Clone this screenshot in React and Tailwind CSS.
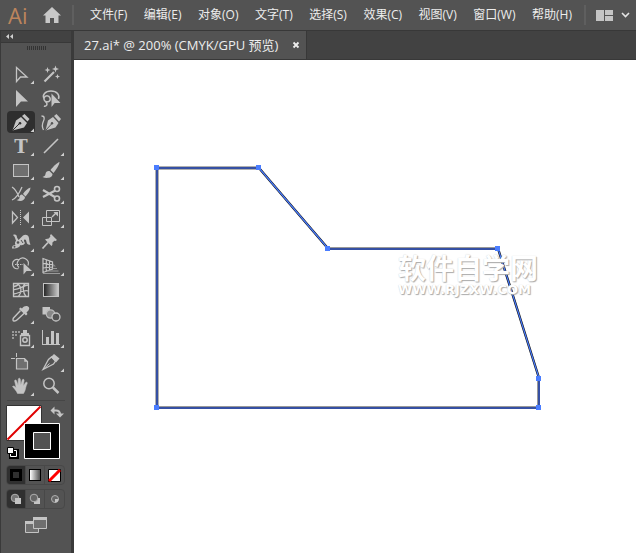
import React, { useState } from 'react';

const menus = ['文件(F)', '编辑(E)', '对象(O)', '文字(T)', '选择(S)', '效果(C)', '视图(V)', '窗口(W)', '帮助(H)'];

const C = '#c4c4c4';

// every icon is drawn on a 28 x 22 grid
const tools = [
  { name: 'Direct Selection', more: true, icon: <path d="M9.5 4.5v14l4-4.5h6.5z" fill="none" stroke={C} strokeWidth="1.3" /> },
  {
    name: 'Magic Wand', icon: <g stroke={C} fill={C}>
      <path d="M7.5 18.5L17 9" strokeWidth="2.2" />
      <path d="M10.5 4l.8 2.2 2.2.8-2.2.8-.8 2.2-.8-2.2-2.2-.8 2.2-.8zM18.5 2.5l.9 2.6 2.6.9-2.6.9-.9 2.6-.9-2.6-2.6-.9 2.6-.9zM20.5 11l.7 1.8 1.8.7-1.8.7-.7 1.8-.7-1.8-1.8-.7 1.8-.7z" stroke="none" />
    </g>
  },
  { name: 'Selection', icon: <path d="M9 3v17l5-5.5h7z" fill={C} /> },
  {
    name: 'Lasso', icon: <g fill="none" stroke={C} strokeWidth="1.5">
      <path d="M7 11.5C5 8 8 4 14 4s9 4 7.5 8" />
      <path d="M8 14c3 2 6 0 5-3s-5-3-6 0 3 4 3 6-2 2.5-3 2" />
      <path d="M14.5 6.5v13.5l3.2-4H23.5z" fill={C} stroke="none" />
    </g>
  },
  {
    name: 'Pen', more: true, icon: <g>
      <path d="M5.5 19.5L9 9.5l5-3.5 6 6-3 4.5z" fill={C} />
      <path d="M15 5l2.5-2 5 5-2 2.5z" fill={C} />
      <path d="M5.5 19.5l6.5-6.5" stroke="#2e2e2e" strokeWidth="1" />
      <circle cx="13" cy="12.2" r="1.3" fill="#2e2e2e" />
    </g>
  },
  {
    name: 'Curvature', icon: <g>
      <path d="M8.5 19.5L11 9.5l5-3.5 5.5 6-3 4.5z" fill={C} />
      <path d="M17 5l2.5-2 4.5 5-2 2.5z" fill={C} />
      <path d="M8.5 19.5l6-6.5" stroke="#535353" strokeWidth="1" />
      <circle cx="15" cy="12.2" r="1.2" fill="#535353" />
      <path d="M4.5 5c3.5 0 3 3 1.8 5.5S5 16 6.5 19" fill="none" stroke={C} strokeWidth="1.3" />
    </g>
  },
  { name: 'Type', more: true, icon: <text x="14" y="18" textAnchor="middle" fontFamily="DejaVu Serif, serif" fontSize="18" fontWeight="bold" fill={C}>T</text> },
  { name: 'Line Segment', more: true, icon: <path d="M7 18L21 4" stroke={C} strokeWidth="1.6" /> },
  { name: 'Rectangle', more: true, icon: <rect x="6.5" y="5.5" width="15" height="12" fill="#6f6f6f" stroke={C} /> },
  {
    name: 'Paintbrush', more: true, icon: <g fill={C}>
      <path d="M22.5 3c-2 .5-6 4-9 8l3 3c3-4 6-8.5 6-11z" />
      <path d="M12.5 12c-2-.5-3.8.8-4 3-.2 2-1.5 2.5-3 3 4 1.8 10 1 10-3z" />
    </g>
  },
  {
    name: 'Shaper', more: true, icon: <g>
      <path d="M5 4c2.5 1.5 5 5 7 10M5 17c3-1 7-6 10-13" fill="none" stroke={C} strokeWidth="1.3" />
      <path d="M23.5 4.5c-3 1-6 4-7.5 6.5l2.5 2.5c2.5-3 5-6 5-9zM15 11.5c-2 0-2.5 1.5-2.5 3s-1.5 2.5-3 2.5c4 2 8.5.5 8.5-3z" fill={C} />
    </g>
  },
  {
    name: 'Scissors', more: true, icon: <g fill="none" stroke={C} strokeWidth="1.6">
      <circle cx="20" cy="6" r="2.5" />
      <circle cx="20" cy="15.5" r="2.5" />
      <path d="M17.8 7.8L6 14M17.8 14L6 7" strokeWidth="2.2" />
    </g>
  },
  {
    name: 'Reflect', more: true, icon: <g fill="none" stroke={C}>
      <path d="M5.5 5v11l5-5.5z" strokeWidth="1.3" />
      <path d="M13.5 3v15" strokeDasharray="1 1" />
      <path d="M22 4.5v12L16 10.5z" fill={C} stroke="none" />
    </g>
  },
  {
    name: 'Scale', more: true, icon: <g fill="none" stroke={C}>
      <path d="M9.5 3.5h13v11h-13z" />
      <path d="M5.5 10.5h9v8h-9z" />
      <path d="M15 10l4-4" strokeWidth="1.5" />
      <path d="M16.5 5H21v4.5z" fill={C} stroke="none" />
    </g>
  },
  {
    name: 'Width', more: true, icon: <g>
      <path d="M6 4c2.500-1 4 0 4 2.500l1.500 2.500L16 4.500c2.500-1.500 5.500-.5 6 2.500.3 2 .2 4 1.500 6.500-2 .8-3.800-.5-4-2.500-.2-1.500-.8-3-2-2.500-1 .5-.5 2 .5 3.500-1 2-3 2.500-4.500 2-1 2.500-4 4-8.500 3.500 0-2.500 1-3.500 3.500-3.500-1-1.500-.5-3 .5-4.500C8 8 8.500 6 6 4z" fill={C} />
      <circle cx="11" cy="11.500" r="1.3" fill="#535353" />
      <path d="M14 9l2 3" stroke="#535353" />
      <circle cx="7.500" cy="15.800" r="1" fill="#535353" />
    </g>
  },
  {
    name: 'Puppet Warp', more: true, icon: <g>
      <path d="M14 3l6 6-1.5 1-1.2-.3-2 2c.4 1.5 0 2.5-.8 3.3L8 8.5c1-.8 2-1 3.3-.7l2-2L13 4.5z" fill={C} />
      <path d="M5.5 17.5l5.5-6" stroke={C} strokeWidth="1.8" />
    </g>
  },
  {
    name: 'Shape Builder', more: true, icon: <g fill="none" stroke={C} strokeWidth="1.2">
      <path d="M11.5 13.5c-3.5 1-6-1.5-6-4.5s3-5.5 6.5-4.2" />
      <path d="M12 12.5a5.5 5.5 0 1 1 9-2" />
      <path d="M8 9.5h8" strokeDasharray="1.5 1" />
      <path d="M16.5 8v11.5l3-3.5H25z" fill={C} stroke="none" />
    </g>
  },
  {
    name: 'Perspective Grid', more: true, icon: <g fill="none" stroke={C} strokeWidth="1.2">
      <path d="M6 3.5v14l9.5-3.5V7zM9.3 4.5v12M12.5 5.8v9.4M6 8.3l9.5 1.4M6 13l9.5-1" />
      <path d="M16 8.5l3 3h-3" fill="#888" stroke="none" />
      <path d="M15.5 13.5H20M11 16h10.5M6 18.5h17" stroke="#999" />
    </g>
  },
  {
    name: 'Mesh', icon: <g fill="none" stroke={C} strokeWidth="1.3">
      <path d="M6.5 4.5h15v13h-15z" />
      <path d="M10 4.5c5 3 5 9 1.5 13M21.5 6c-5 0-9 5-15 4.5M21.5 12c-5-2-10 3-15 3M18 4.5c-3 3-2 9 1 13M6.5 7.5c3 0 4-1 5.5-3" />
    </g>
  },
  {
    name: 'Gradient', icon: <g>
      <defs><linearGradient id="toolGrad"><stop stopColor="#222" /><stop offset="1" stopColor="#ccc" /></linearGradient></defs>
      <rect x="6.5" y="4.5" width="15" height="13" fill="url(#toolGrad)" stroke={C} />
    </g>
  },
  {
    name: 'Eyedropper', more: true, icon: <g>
      <path d="M13.5 7.5L6.5 15c-1 1.5-.5 3.5 1 3 1.5 0 2-.5 3-1.5l7-6.5" fill="none" stroke={C} strokeWidth="1.4" />
      <path d="M12 6l1.5-1.5 1.5 1C17 3 19 2.5 21 3.5s1.5 3.5-1.5 6l1 1.5-1.5 1.5z" fill={C} />
    </g>
  },
  {
    name: 'Blend', icon: <g>
      <path d="M5.5 4h7.5v7.5H5.5z" fill={C} />
      <circle cx="13.5" cy="11" r="4.2" fill="#888" stroke="#bbb" strokeWidth="1.2" />
      <circle cx="19" cy="14" r="4" fill="#535353" stroke={C} strokeWidth="1.3" />
    </g>
  },
  {
    name: 'Symbol Sprayer', more: true, icon: <g>
      <path d="M5 4h2v2H5zM8 4h2v2H8zM11 4h2v2h-2zM5 7h2v2H5zM8 7h2v2H8zM5 10h2v2H5z" fill="#999" />
      <path d="M13.5 8.5h9v10h-9z" fill="none" stroke={C} strokeWidth="1.4" />
      <path d="M16 3h4v3h2v2h-8V6h2z" fill={C} />
      <circle cx="18" cy="13" r="2.2" fill="none" stroke={C} strokeWidth="1.5" />
    </g>
  },
  {
    name: 'Column Graph', more: true, icon: <g fill={C}>
      <path d="M5 3h1v14h17v1H5z" />
      <path d="M9 10h3v7H9zM14 4h3v13h-3zM19 6h3v11h-3z" />
    </g>
  },
  {
    name: 'Artboard', icon: <g stroke={C}>
      <path d="M9.5 7.5h8l3 3v7.5h-11z" fill="#6f6f6f" strokeWidth="1.2" />
      <path d="M4 7.5h4M9.5 2v4" />
      <path d="M17.5 7.5v3h3z" fill={C} strokeWidth="0.5" />
    </g>
  },
  {
    name: 'Slice', more: true, icon: <g>
      <path d="M6 18.5l5.5-10 3-2.5 4 4-2 3z" fill="none" stroke={C} strokeWidth="1.3" />
      <path d="M6 18.5l6.5-6" stroke={C} />
      <path d="M14 6l3-3 5.5 4.5-3.5 4z" fill={C} />
    </g>
  },
  {
    name: 'Hand', more: true, icon: <path d="M10.5 18.5c-1-2.5-3-4.5-5-7 .8-1 2-.5 3.7 1.2L7.6 6c0-1.3 1.5-1.5 1.9-.2l1.6 4.4.2-6c.2-1.3 1.8-1.3 2 0l.5 5.8 1.4-5c.5-1.2 2-.8 1.9.5l-.9 5.5 2.5-3.5c.9-.9 2 0 1.5 1-1.5 3-1.5 5-2.2 7-.3 1.2-1 2-1.5 3z" fill={C} stroke={C} strokeWidth="0.5" />
  },
  {
    name: 'Zoom', icon: <g fill="none" stroke={C}>
      <circle cx="12" cy="8.5" r="5.2" strokeWidth="1.5" />
      <path d="M16 12.5l5.5 5.5" strokeWidth="2.5" />
    </g>
  },
];

// anchor points of the selected path, in artboard coordinates
const anchors = [[82, 107], [184, 107], [253, 188], [423, 188], [464, 318], [464, 347], [82, 347]];

function MenuBar() {
  return (
    <header className="flex h-[31px] shrink-0 items-center border-b border-[#383838] pr-1">
      <span className="w-8 pl-2 font-['Open_Sans',sans-serif] text-[22px] leading-6 font-medium text-[#bd855d]">Ai</span>
      <button aria-label="Home" className="flex w-10 justify-center">
        <svg width="18" height="16" viewBox="0 0 18 16" fill="#c8c8c8">
          <path d="M9 0L18 8.5h-2.5V16h-4.5v-5H7v5H2.5V8.5H0z" />
        </svg>
      </button>
      <div className="h-5 w-0.5 bg-[#5f5f5f]" />
      <nav className="flex flex-1 items-center justify-between pr-3 pl-4">
        {menus.map((m) => (
          <button key={m} className="text-xs leading-5 whitespace-nowrap">{m}</button>
        ))}
      </nav>
      <div className="h-5 w-0.5 bg-[#5f5f5f]" />
      <button aria-label="Arrange documents" className="flex items-center gap-2 pr-0.5 pl-2.5">
        <svg width="17" height="11" viewBox="0 0 17 11" fill="#c4c4c4">
          <path d="M0 0h8v11H0zM9 0h8v5H9zM9 6h8v5H9z" />
        </svg>
        <svg width="9" height="6" viewBox="0 0 9 6" fill="none" stroke="#e4e4e4" strokeWidth="1.6">
          <path d="M1 1l3.5 3.5L8 1" />
        </svg>
      </button>
    </header>
  );
}

function ToolPanel() {
  const [active, setActive] = useState('Pen');
  return (
    <aside className="flex w-[74px] shrink-0 flex-col border-r-3 border-l border-[#3a3a3a]">
      <div className="flex h-3 items-center border-b border-[#383838] bg-[#424242] pl-1">
        <svg width="9" height="5" viewBox="0 0 9 5" fill="#d0d0d0">
          <path d="M4 0v5L1 2.500zM8 0v5L5 2.500z" />
        </svg>
      </div>
      <div className="flex h-5 justify-center pt-[3px]">
        <svg width="19" height="4" viewBox="0 0 19 4">
          <path d="M0 2h19" stroke="#333" strokeWidth="4" strokeDasharray="1 1" />
        </svg>
      </div>
      <div className="grid grid-cols-[28px_28px] gap-0.5 pl-1.5">
        {tools.map((t) => (
          <button
            key={t.name}
            aria-label={t.name}
            onClick={() => setActive(t.name)}
            className={t.name === active ? 'rounded-sm bg-[#2e2e2e]' : 'rounded-sm'}
          >
            <svg width="28" height="22" viewBox="0 0 28 22" className="block">
              {t.icon}
              {t.more && <path d="M27 17.5V21h-3.5z" fill="#d0d0d0" />}
            </svg>
          </button>
        ))}
      </div>
      <div className="mx-1.5 mt-[3px] h-px bg-[#464646]" />
      <ColorControls />
    </aside>
  );
}

function ColorControls() {
  return (
    <div className="flex flex-col items-start pt-1 pl-[5px]">
      {/* fill and stroke swatches */}
      <svg width="60" height="56" viewBox="0 0 60 56" role="img" aria-label="Fill and stroke">
        <path d="M.5.5h35v35H.5z" fill="#fff" stroke="#333" />
        <path d="M1.5 34.5l33-33" stroke="#e00000" strokeWidth="2" />
        <path d="M18.5 18.5h35v35h-35z" fill="#000" stroke="#fff" />
        <path d="M27.5 27.5h17v17h-17z" fill="#535353" stroke="#fff" />
        <path d="M47 5.5h3c3 0 4 2 4 4" fill="none" stroke={C} strokeWidth="2" />
        <path d="M44.5 5.5l4-4v8zM50 8.5h8l-4 4z" fill={C} />
        <path d="M4.5 45.5h7v7h-7z" fill="#000" stroke="#000" strokeWidth="3" />
        <path d="M4.5 45.5h6v6h-6z" fill="none" stroke="#fff" />
        <path d="M1.5 42.5h6v6h-6z" fill="#fff" stroke="#000" />
      </svg>
      <div className="mt-1 grid grid-cols-3 divide-x divide-[#484848] overflow-hidden rounded-sm border border-[#484848]">
        <button aria-label="Color" className="flex h-[18px] w-[19px] items-center justify-center bg-[#303030]">
          <span className="block h-3 w-3 border-3 border-black bg-[#303030]" />
        </button>
        <button aria-label="Gradient fill" className="flex h-[18px] w-[19px] items-center justify-center">
          <span className="block h-3 w-3 border border-black bg-linear-to-r from-white to-[#555]" />
        </button>
        <button aria-label="None" className="flex h-[18px] w-[19px] items-center justify-center">
          <svg width="13" height="13" viewBox="0 0 13 13">
            <path d="M.5.5h12v12H.5z" fill="#fff" stroke="#000" />
            <path d="M1 12L12 1" stroke="#f00" strokeWidth="3" />
          </svg>
        </button>
      </div>
      <div className="mt-1 grid grid-cols-3 divide-x divide-[#484848] overflow-hidden rounded-sm border border-[#484848]">
        <button aria-label="Draw normal" className="flex h-[18px] w-[19px] items-center justify-center bg-[#303030]">
          <svg width="12" height="12" viewBox="0 0 12 12">
            <circle cx="5" cy="5" r="3.8" fill="#777" stroke="#b0b0b0" />
            <path d="M5 5h6v6H5z" fill={C} />
          </svg>
        </button>
        <button aria-label="Draw behind" className="flex h-[18px] w-[19px] items-center justify-center">
          <svg width="12" height="12" viewBox="0 0 12 12">
            <path d="M5 5h6v6H5z" fill={C} />
            <circle cx="5" cy="5" r="3.8" fill="#666" stroke="#b0b0b0" />
          </svg>
        </button>
        <button aria-label="Draw inside" className="flex h-[18px] w-[19px] items-center justify-center">
          <svg width="12" height="12" viewBox="0 0 12 12">
            <circle cx="6" cy="6" r="3.5" fill="#666" stroke="#b0b0b0" />
            <path d="M6 6h3.5a3.5 3.5 0 0 1-3.5 3.5z" fill={C} />
          </svg>
        </button>
      </div>
      <button aria-label="Screen mode" className="mt-2 ml-[19px]">
        <svg width="23" height="16" viewBox="0 0 23 16" className="block">
          <path d="M.5 5.5h13v10H.5z" fill="#6f6f6f" stroke={C} />
          <path d="M8.5.5h13v11h-13z" fill="#6f6f6f" stroke={C} />
          <path d="M8 0h14v3H8zM0 4h8v3H0z" fill={C} />
        </svg>
      </button>
    </div>
  );
}

function Artboard() {
  return (
    <main className="relative flex-1 overflow-hidden bg-white">
      <svg width="562" height="493" viewBox="0 0 562 493" className="absolute top-0 left-0" fill="none">
        <path d="M81 108H185M83 348V107" stroke="#b0b0b0" strokeWidth="4" />
        <path d="M254 188.5H424M464.5 318V348M83 347.5H465" stroke="#999" strokeWidth="3" />
        <path d="M185 108L254 188.5M424 188.5L465 318" stroke="#111" strokeWidth="2.4" />
        <path d="M185 108L254 188.5M424 188.5L465 318" stroke="#4a7dff" strokeWidth="1.2" />
        <path d="M82 108H185M83 348V107M254 189H424M465 318V348M82 348H465" stroke="#3550a3" strokeWidth="2" />
      </svg>
      <div className="absolute top-[194px] left-[324px] font-bold text-white [text-shadow:1px_1px_1px_#aaa,0_0_1px_#ccc]">
        <p className="text-[28px] leading-7">软件自学网</p>
        <p className="font-['DejaVu_Sans',sans-serif] text-[13px] leading-4">WWW.RJZXW.COM</p>
      </div>
      <svg width="562" height="493" viewBox="0 0 562 493" className="absolute top-0 left-0">
        {anchors.map(([x, y]) => (
          <rect key={`${x}-${y}`} x={x - 2} y={y - 2} width="5" height="5" fill="#4a7dff" />
        ))}
      </svg>
    </main>
  );
}

function App() {
  return (
    <div className="flex min-h-screen flex-col bg-[#535353] font-['Open_Sans','Noto_Sans_CJK_SC',sans-serif] text-[#ededed]">
      <MenuBar />
      <div className="flex flex-1">
        <ToolPanel />
        <div className="flex min-w-0 flex-1 flex-col">
          <div className="flex h-[29px] shrink-0 border-b border-[#383838] bg-[#424242]">
            <div className="flex items-center gap-3.5 border-r border-[#383838] bg-[#535353] pr-1.5 pl-2.5">
              <span className="text-[13px] leading-5 whitespace-nowrap">27.ai* @ 200% (CMYK/GPU 预览)</span>
              <button aria-label="Close tab">
                <svg width="8" height="8" viewBox="0 0 8 8" stroke="#eee" strokeWidth="1.8">
                  <path d="M1.5 1.5l5 5M6.5 1.5l-5 5" />
                </svg>
              </button>
            </div>
          </div>
          <Artboard />
        </div>
      </div>
    </div>
  );
}

export default App;
